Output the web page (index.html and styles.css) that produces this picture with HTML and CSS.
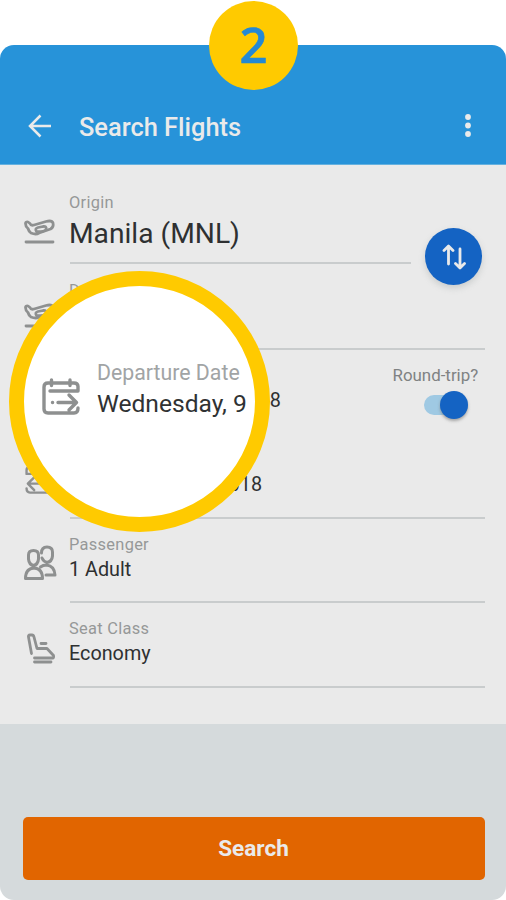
FILE: index.html
```html
<!DOCTYPE html>
<html lang="en">
<head>
<meta charset="utf-8">
<title>Search Flights</title>
<link rel="stylesheet" href="styles.css">
</head>
<body>
<svg class="symbols" aria-hidden="true">
  <symbol id="plane" viewBox="0 0 34 30">
    <path d="M3.500 5.500Q3.500 3.500 6 4L8 5.500Q9 8 12 7L24 3.500Q30 2 31 5Q32 9 28.500 11L17 15Q14 17 9 15Q7 14 6 10.500Q3.500 8.500 3.500 5.500Z"/>
    <path d="M14.500 13.500Q12.500 10.500 16 9.500L21 8.500Q25 8 24 11.500Q22 14 14.500 13.500Z"/>
    <path d="M4 24H31"/>
  </symbol>
  <symbol id="calendar" viewBox="0 0 40 40">
    <path d="M37 14V9.500Q37 6 33 6H7Q3 6 3 10V32Q3 36 7 36H33Q37 36 37 31M10.500 3V8.500M29 3V8.500M9 14H35M17 25.500H35M28 18L35.500 25.500L28 33M11.500 25.500H11.600"/>
  </symbol>
</svg>
<main class="screen">
  <div class="step">2</div>
  <header class="appbar">
    <svg class="back" viewBox="0 0 24 24"><path d="M23 12H2M12.500 1.500L2 12L12.500 22.500"/></svg>
    <h1>Search Flights</h1>
    <svg class="more" viewBox="0 0 6 24"><circle cx="3" cy="3" r="2.900"/><circle cx="3" cy="11.500" r="2.900"/><circle cx="3" cy="20" r="2.900"/></svg>
  </header>
  <section class="form">
    <div class="row origin">
      <svg class="icon plane"><use href="#plane"/></svg>
      <div class="field"><label>Origin</label><strong class="large">Manila (MNL)</strong></div>
      <button class="swap" aria-label="Swap"><svg viewBox="0 0 24 26"><path d="M6.500 20V2.500M2 6.500L6.500 2L11 6.500M18 5V23M13.500 19.500L18 24L22.500 19.500"/></svg></button>
    </div>
    <div class="row">
      <svg class="icon plane"><use href="#plane"/></svg>
      <div class="field"><label>Destination</label></div>
    </div>
    <div class="row departure">
      <div class="field"><strong class="date">18</strong></div>
      <div class="trip"><span>Round-trip?</span><i class="toggle"></i></div>
    </div>
    <div class="row">
      <svg class="icon return"><use href="#calendar"/></svg>
      <div class="field"><label>Return Date</label><strong class="date return-date">Friday, 11 May 2018</strong></div>
    </div>
    <div class="row">
      <svg class="icon people" viewBox="0 0 34 36"><path d="M9.500 5.500Q14.500 5.500 14.500 10V14Q14 19.500 9.500 20.500Q5 19.500 4.500 14V10Q4.500 5.500 9.500 5.500ZM1.500 33.500Q1.500 23.500 10 23Q18.500 23.500 18.500 33.500ZM17.500 8Q17.500 2 23 2Q28.500 2 28.500 7V11Q28 16.500 23 17.500Q19.500 16.500 18 13M16.500 22Q19 20 22.500 20Q30.500 21 31 30H22"/></svg>
      <div class="field"><label>Passenger</label><strong>1 Adult</strong></div>
    </div>
    <div class="row">
      <svg class="icon seat" viewBox="0 0 32 32"><path d="M6.500 21.500L3.500 5Q3 3 5 3H7Q8.500 3 9 5L12 16.500H22L28.500 23.500Q29 26 27.500 26H9.500M16 11.500H21M9.500 30H26"/></svg>
      <div class="field"><label>Seat Class</label><strong>Economy</strong></div>
    </div>
  </section>
  <footer><button class="search">Search</button></footer>
  <div class="lens">
    <svg class="lens-icon"><use href="#calendar"/></svg>
    <div class="lens-copy"><span>Departure Date</span><strong>Wednesday, 9</strong></div>
  </div>
</main>
</body>
</html>
```

FILE: styles.css
```css
* { box-sizing: border-box; }
body { margin: 0; background: #fff; font-family: Roboto, sans-serif; }
button { border: 0; padding: 0; font-family: inherit; }
svg { fill: none; stroke: #8e9090; stroke-width: 2.8; stroke-linecap: round; stroke-linejoin: round; flex: none; }
.symbols { position: absolute; width: 0; height: 0; }
.screen { position: relative; width: 506px; height: 900px; padding-top: 45px; overflow: hidden; }
.step { position: absolute; left: 209px; top: 1px; width: 89px; height: 89px; border-radius: 50%; background: #ffca00; color: #2489d4; font: 600 49px/86px "Open Sans", sans-serif; -webkit-text-stroke: .6px #2489d4; text-align: center; }
.appbar { height: 120px; padding: 42px 35px 0 28px; border-radius: 14px 14px 0 0; background: #2793d9; display: flex; align-items: center; border-bottom: 1px solid #65b1df; }
.appbar h1 { margin: 2px auto 0 27px; color: #eaeaea; font-size: 25.4px; line-height: 30px; font-weight: 500; }
.back { width: 24px; height: 24px; stroke: #eaeaea; stroke-width: 2.5; stroke-linecap: butt; stroke-linejoin: miter; }
.more { width: 6px; height: 24px; fill: #eaeaea; stroke: none; }
.form { height: 559px; background: #eaeaea; }
.row { height: 84.5px; padding: 16px 21.5px 0 22px; display: flex; }
.origin { height: 99px; padding-top: 28px; }
.icon { width: 34px; height: 34px; margin: 8px 12px 0 2px; }
.plane { height: 30px; margin: 25px 14px 0 0; }
.row:nth-child(2) .plane { margin-top: 22px; }
.field { flex: 1; border-bottom: 2px solid #c9cccd; display: flex; flex-direction: column; position: relative; top: 1px; }
.field label { margin-left: -1px; height: 22px; font-size: 16.4px; line-height: 20px; color: #969898; letter-spacing: .3px; }
.field strong { margin-left: -1px; font-size: 19.8px; line-height: 25px; font-weight: 400; color: #2e3031; white-space: nowrap; }
.field .large { font-size: 28.2px; line-height: 32px; margin-top: 3px; }
.origin .field { flex: none; width: 341px; top: 0; }
.swap { width: 57px; height: 57px; margin: 35px 0 0 14px; border-radius: 50%; background: #1463c3; box-shadow: 0 3px 6px #8a929455; display: flex; align-items: center; justify-content: center; flex: none; }
.swap svg { width: 24px; height: 26px; stroke: #eaeaea; stroke-width: 2.8; }
.departure .field { margin-left: 48px; padding-top: 22px; border: 0; }
.field .date { width: 212px; text-align: right; }
.field .return-date { width: 193px; }
.trip { width: 92px; color: #7f8283; font-size: 16.9px; line-height: 20px; display: flex; flex-direction: column; align-items: flex-start; }
.trip span { white-space: nowrap; }
.toggle { width: 44px; height: 20px; margin: 10px 0 0 31px; border-radius: 10px; background: #9fc9e3; display: flex; align-items: center; justify-content: flex-end; }
.toggle::after { content: ""; width: 28px; height: 28px; border-radius: 50%; background: #1463c3; box-shadow: 0 2px 3px #7779; }
.return { height: 34px; margin-top: 13px; transform: scaleX(-1); }
.people { height: 36px; stroke-width: 3; margin-top: 11px; }
.seat { width: 32px; height: 32px; margin: 14px 13px 0 3px; }
footer { height: 176px; padding: 93px 21.5px 0 22.5px; border-radius: 0 0 14px 14px; background: #d5dadc; }
.search { display: block; width: 100%; height: 63px; border-radius: 5px; background: #e16500; color: #eaeaea; font-size: 22.6px; font-weight: 700; line-height: 64px; }
.lens { position: absolute; left: 9px; top: 271px; width: 261px; height: 261px; border: 15px solid #ffca00; border-radius: 50%; background: #fff; overflow: hidden; display: flex; padding: 74px 0 0 17px; }
.lens-icon { width: 40px; height: 40px; margin-top: 17px; stroke-width: 3.4; }
.lens-copy { margin-left: 16px; display: flex; flex-direction: column; white-space: nowrap; }
.lens-copy span { font-size: 21.3px; line-height: 26px; color: #a1a4a5; }
.lens-copy strong { font-size: 24.6px; line-height: 32px; margin-top: 2px; font-weight: 400; color: #303233; }
```
